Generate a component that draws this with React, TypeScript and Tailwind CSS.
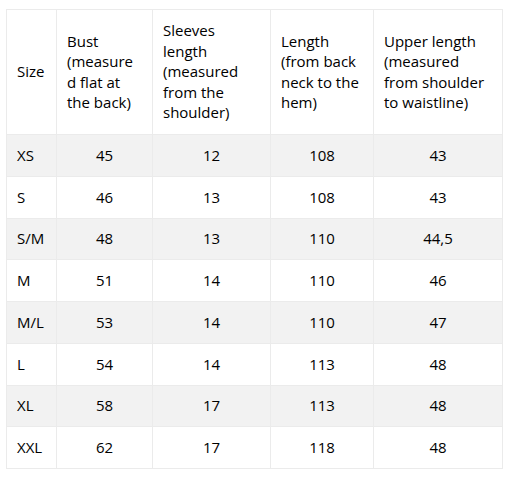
const header = [
  'Size',
  'Bust (measured flat at the back)',
  'Sleeves length (measured from the shoulder)',
  'Length (from back neck to the hem)',
  'Upper length (measured from shoulder to waistline)',
];

const rows = [
  ['XS', '45', '12', '108', '43'],
  ['S', '46', '13', '108', '43'],
  ['S/M', '48', '13', '110', '44,5'],
  ['M', '51', '14', '110', '46'],
  ['M/L', '53', '14', '110', '47'],
  ['L', '54', '14', '113', '48'],
  ['XL', '58', '17', '113', '48'],
  ['XXL', '62', '17', '118', '48'],
];

const widths = ['w-[50px]', 'w-[96px]', 'w-[118px]', 'w-[103px]', 'w-[129px]'];

export default function App() {
  return (
    <div className="bg-white min-h-[477px] pt-[9px] pl-[6px] font-['Open_Sans',sans-serif] text-[15px] text-black">
      <table className="w-[496px] table-fixed border-collapse">
        <colgroup>
          {widths.map((w) => (
            <col key={w} className={w} />
          ))}
        </colgroup>
        <thead>
          <tr className="h-[125px]">
            {header.map((h) => (
              <th
                key={h}
                className="border border-[#ebebeb] px-[10px] pb-[1px] text-left font-normal leading-[20.4px] break-words align-middle"
              >
                {h}
              </th>
            ))}
          </tr>
        </thead>
        <tbody>
          {rows.map((r, i) => (
            <tr key={r[0]} className={`h-[41.75px] ${i % 2 === 0 ? 'bg-[#f2f2f2]' : 'bg-white'}`}>
              {r.map((c, j) => (
                <td
                  key={j}
                  className={`border border-[#ebebeb] px-[10px] pb-[1px] leading-[20px] ${j === 0 ? 'text-left' : 'text-center'}`}
                >
                  {c}
                </td>
              ))}
            </tr>
          ))}
        </tbody>
      </table>
    </div>
  );
}
